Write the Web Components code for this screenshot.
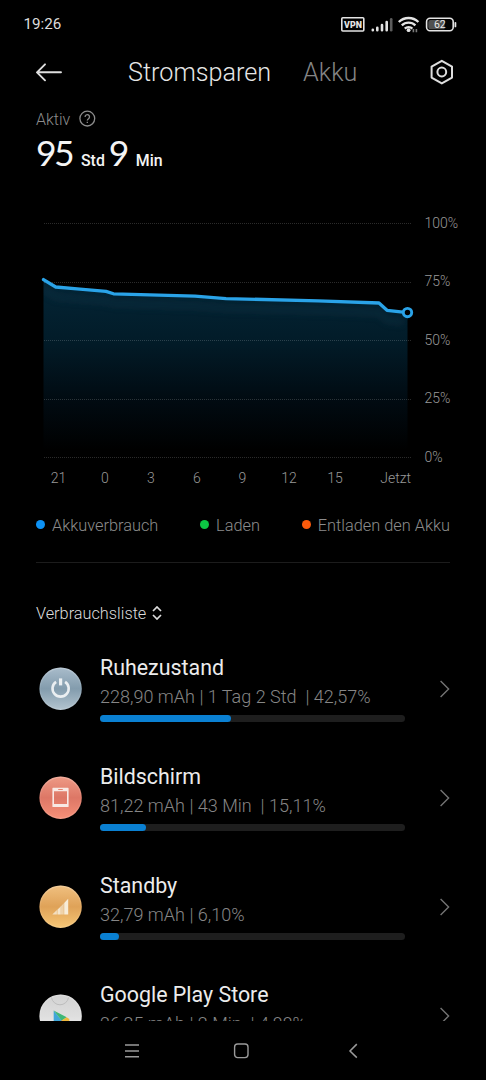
<!DOCTYPE html>
<html lang="de">
<head>
<meta charset="utf-8">
<title>Akku</title>
<style>
html, body {
  margin: 0;
  background: #000;
}
body {
  width: 486px;
  height: 1080px;
  overflow: hidden;
  font-family: Roboto, sans-serif;
  color: #e6e6e6;
}
</style>
</head>
<body>
<battery-app>
  <status-bar slot="status" time="19:26"></status-bar>
  <title-bar slot="title">
    <span slot="active">Stromsparen</span>
    <span slot="other">Akku</span>
  </title-bar>
  <active-time label="Aktiv" hours="95" minutes="9"></active-time>
  <battery-chart></battery-chart>
  <chart-legend>
    <legend-item color="#0d92f5">Akkuverbrauch</legend-item>
    <legend-item color="#0cc543">Laden</legend-item>
    <legend-item color="#fb5a0b">Entladen den Akku</legend-item>
  </chart-legend>
  <list-heading>Verbrauchsliste</list-heading>
  <usage-row icon="power" percent="43">
    Ruhezustand
    <span slot="detail">228,90 mAh | 1 Tag 2 Std&nbsp; | 42,57%</span>
  </usage-row>
  <usage-row icon="screen" percent="15.1">
    Bildschirm
    <span slot="detail">81,22 mAh | 43 Min&nbsp; | 15,11%</span>
  </usage-row>
  <usage-row icon="signal" percent="6.1">
    Standby
    <span slot="detail">32,79 mAh | 6,10%</span>
  </usage-row>
  <usage-row icon="play" percent="4.9">
    Google Play Store
    <span slot="detail">26,25 mAh | 2 Min&nbsp; | 4,88%</span>
  </usage-row>
  <nav-bar slot="nav"></nav-bar>
</battery-app>

<script>
// every element here does the same thing: open a shadow root
// and put its markup in it
class BaseElement extends HTMLElement {
  constructor() {
    super();
    this.attachShadow({ mode: 'open' });
  }
  connectedCallback() {
    this.shadowRoot.innerHTML = this.render();
  }
}

// the whole screen: bars on top and bottom, content is cut off above the nav
class BatteryApp extends BaseElement {
  render() {
    return `
<style>
:host { display: flex; flex-direction: column; height: 1080px; background: #000; }
main { flex: 1; min-height: 0; overflow: hidden; }
</style>
<slot name="status"></slot>
<slot name="title"></slot>
<main><slot></slot></main>
<slot name="nav"></slot>`;
  }
}

class StatusBar extends BaseElement {
  render() {
    return `
<style>
:host {
  display: flex; justify-content: space-between; align-items: center;
  box-sizing: border-box; height: 47px; padding: 0 28px 0 23.4px;
  font-size: 15.2px; color: #dcdcdc;
}
svg { display: block; }
</style>
<span>${this.getAttribute('time')}</span>
<svg width="118" height="20" viewBox="340 13 118 20">
  <rect x="341.8" y="16.8" width="22" height="13.2" rx="1" fill="none" stroke="#e4e4e4" stroke-width="1.6"/>
  <text x="344.1" y="26.7" font-family="Roboto" font-weight="900" font-size="8.8" textLength="17.8" lengthAdjust="spacingAndGlyphs" fill="#e4e4e4">VPN</text>
  <g stroke="#e4e4e4" stroke-width="2.6" stroke-linecap="round">
    <path d="M372.8 28.8v.4M377.3 26.8v2.4M382 24v5.2M386.7 21v8.2"/>
    <path d="M391.2 18.2v11" stroke="#5c5c5c"/>
  </g>
  <g fill="none" stroke="#e4e4e4" stroke-width="2.3">
    <path d="M398.8 21a14 14 0 0 1 19.6 0"/>
    <path d="M401.8 24.4a9.6 9.6 0 0 1 13.6 0"/>
    <path d="M404.8 27.6a5.4 5.4 0 0 1 7.6 0"/>
  </g>
  <circle cx="408.6" cy="29.2" r="1.9" fill="#e4e4e4"/>
  <path d="M413.4 28v3.2M416.4 28v3.2" stroke="#7a7a7a" stroke-width="1.6"/>
  <rect x="426.6" y="17.3" width="26.6" height="12.4" rx="3.4" fill="none" stroke="#e4e4e4" stroke-width="1.6"/>
  <path d="M430.5 19h14v9.2h-14a2.2 2.2 0 0 1-2.2-2.2v-4.8a2.2 2.2 0 0 1 2.2-2.2z" fill="#505050"/>
  <path d="M455.4 21.8v3.6" stroke="#e4e4e4" stroke-width="1.8" stroke-linecap="round"/>
  <text x="439.8" y="27.4" text-anchor="middle" font-family="Roboto" font-size="10.5" fill="#e8e8e8">62</text>
</svg>`;
  }
}

class TitleBar extends BaseElement {
  render() {
    return `
<style>
:host {
  display: grid; grid-template-columns: 92px auto 1fr 24px; align-items: center;
  height: 50px; padding: 0 32px 0 36px;
  font-size: 25.2px; font-weight: 300; line-height: 52px;
}
svg { display: block; margin-bottom: 2px; }
.other { padding-left: 32px; color: #858585; }
</style>
<svg width="28" height="20" viewBox="0 0 28 20" fill="none" stroke="#dedede" stroke-width="1.9" stroke-linecap="round" stroke-linejoin="round">
  <path d="M25 10.3H1.2M9 2.3L1 10.3l8 8"/>
</svg>
<slot name="active"></slot>
<div class="other"><slot name="other"></slot></div>
<svg width="24" height="26" viewBox="0 0 24 26" fill="none" stroke="#dedede" stroke-width="2" stroke-linejoin="round">
  <path d="M11.8 1.8L22 7.6v11L11.8 24.4 1.6 18.6v-11z"/>
  <circle cx="11.8" cy="13" r="4.4"/>
</svg>`;
  }
}

class ActiveTime extends BaseElement {
  render() {
    return `
<style>
:host { display: block; height: 103px; padding: 0 36px; }
.label {
  display: flex; align-items: center; gap: 9px; height: 44px;
  font-size: 16px; font-weight: 300; color: #8c8c8c;
}
.value { display: flex; align-items: baseline; line-height: 32px; margin-top: -4px; color: #f4f4f4; }
b { font: 400 35.5px/32px Lato, sans-serif; letter-spacing: -2.6px; }
span { font-size: 15.9px; font-weight: 500; margin: 0 4px 0 9px; }
</style>
<div class="label">${this.getAttribute('label')}
  <svg width="18" height="18" viewBox="0 0 18 18" fill="none" stroke="#8c8c8c" stroke-width="1.3">
    <circle cx="8.3" cy="8.6" r="7.4"/>
    <path d="M6.1 6.9a2.2 2.2 0 1 1 3.4 1.8c-.8.6-1.2.9-1.2 1.8M8.3 11.8v1.3"/>
  </svg>
</div>
<div class="value">
  <b>${this.getAttribute('hours')}</b><span>Std</span>
  <b>${this.getAttribute('minutes')}</b><span>Min</span>
</div>`;
  }
}

class BatteryChart extends BaseElement {
  render() {
    const line = 'M43.5 279.6L55.7 287L80 289.2L106 291.4L113.5 293.8L195 296.2L226 298.6L318 300.8L379 303L387 310.3L403 312.2';
    const grid = [223.5, 282.5, 340.5, 399.5, 457.5];
    const percents = [[100, 227.5], [75, 286.3], [50, 344.6], [25, 403.3], [0, 461.5]];
    const hours = [[21, 58.5], [0, 105], [3, 151], [6, 197], [9, 242.5], [12, 289], [15, 335]];
    return `
<style>
:host { display: block; height: 300px; }
svg { display: block; }
text { font-size: 14px; font-weight: 300; fill: #989898; }
</style>
<svg width="486" height="300" viewBox="0 200 486 300">
  <defs>
    <linearGradient id="area" x1="0" y1="280" x2="0" y2="450" gradientUnits="userSpaceOnUse">
      <stop offset="0" stop-color="#042536"/>
      <stop offset=".35" stop-color="#021c29"/>
      <stop offset=".7" stop-color="#010b12"/>
      <stop offset="1" stop-color="#000"/>
    </linearGradient>
    <filter id="soft" x="-10%" y="-100%" width="120%" height="300%"><feGaussianBlur stdDeviation="3"/></filter>
    <clipPath id="under"><path d="${line}L407.5 312.5V458H43.5z"/></clipPath>
  </defs>
  <path d="${line}L407.5 312.5V458H43.5z" fill="url(#area)"/>
  <g clip-path="url(#under)">
    <path d="${line}" transform="translate(0 10)" fill="none" stroke="#12384a" stroke-width="6" opacity=".4" filter="url(#soft)"/>
  </g>
  ${grid.map(y => `<path d="M44 ${y}H411" stroke="#fff" stroke-opacity=".17" stroke-dasharray="1 1"/>`).join('')}
  <path d="${line}" fill="none" stroke="#2aa3e8" stroke-width="3.3" stroke-linecap="round" stroke-linejoin="round"/>
  <circle cx="407.5" cy="312.6" r="4.2" fill="#000" stroke="#2aa3e8" stroke-width="2.9"/>
  ${percents.map(([p, y]) => `<text x="424.5" y="${y}">${p}%</text>`).join('')}
  ${hours.map(([h, x]) => `<text x="${x}" y="482.7" text-anchor="middle">${h}</text>`).join('')}
  <text x="411" y="482.7" text-anchor="end">Jetzt</text>
</svg>`;
  }
}

class ChartLegend extends BaseElement {
  render() {
    return `
<style>
:host {
  display: flex; justify-content: space-between; align-items: center;
  height: 50px; margin: 0 36px; padding-bottom: 12px;
  border-bottom: 1px solid #1c1c1c;
}
</style>
<slot></slot>`;
  }
}

class LegendItem extends BaseElement {
  render() {
    return `
<style>
:host { display: flex; align-items: center; gap: 7px; font-size: 16.35px; font-weight: 300; color: #8c8c8c; }
i { width: 9px; height: 9px; border-radius: 50%; margin-top: -2px; background: ${this.getAttribute('color')}; }
</style>
<i></i><span><slot></slot></span>`;
  }
}

class ListHeading extends BaseElement {
  render() {
    return `
<style>
:host {
  display: flex; align-items: center; gap: 6px; height: 50px;
  margin: 25px 36px 5px; font-size: 16.3px; font-weight: 300; color: #dcdcdc;
}
</style>
<span><slot></slot></span>
<svg width="10" height="14" viewBox="0 0 10 14" fill="none" stroke="#dcdcdc" stroke-width="1.7">
  <path d="M1 5l4-4 4 4M1 9l4 4 4-4"/>
</svg>`;
  }
}

// round icons, all drawn on a 43x43 box
const icons = {
  power: {
    colors: ['#a9bccb', '#839cad', '#b3c4cf'],
    shape: `<g fill="none" stroke="#f0f3f5" stroke-width="2.6" opacity=".95">
      <path d="M17.1 14.8a8.1 8.1 0 1 0 9 0"/><path d="M21.6 11.4v7" stroke-width="3.2"/></g>`,
  },
  screen: {
    colors: ['#ee9a85', '#dd7766', '#f79078'],
    shape: `<path fill="#f8e9e4" fill-rule="evenodd" d="M14 11.8h15a.6.6 0 0 1 .6.6v18a.6.6 0 0 1-.6.6H14a.6.6 0 0 1-.6-.6v-18a.6.6 0 0 1 .6-.6zM15 15.2v12.9h13V15.2zM19.2 13.1v.9h4.6v-.9z"/>`,
  },
  signal: {
    colors: ['#f0c080', '#dfa258', '#f7c776'],
    shape: `<path fill="#f4e8d2" d="M13.3 29.6L17.9 25v4.6z" opacity=".85"/>
      <path fill="#f4e8d2" d="M18.4 24.8l3.3-3.3v8.1h-3.3z" opacity=".95"/>
      <path fill="#f4e8d2" d="M21.7 21.4l3.1-3.1v11.3h-3.1z" opacity=".65"/>
      <path fill="#f7ecd8" d="M25.2 17.9l4-4.2v15.9h-4z"/>`,
  },
  play: {
    colors: ['#d2d2d2', '#dedede', '#f4f4f4'],
    shape: `<path d="M12.5 3.5a8.6 8.6 0 0 0 17 0" fill="none" stroke="#bdbdbd"/>
      <path d="M14.7 16.5v20l8-10z" fill="#3fa6d8"/>
      <path d="M14.7 16.5l13 6.8-5 3.4z" fill="#3fb777"/>
      <path d="M22.5 26.5l5.2-3.2 2.6 1.7v3l-3 1.7z" fill="#efb83c"/>
      <path d="M14.7 36.5l7.8-10 5 3.2z" fill="#e0524d"/>`,
  },
};

class UsageRow extends BaseElement {
  render() {
    const icon = icons[this.getAttribute('icon')];
    const [top, mid, bottom] = icon.colors;
    return `
<style>
:host {
  display: grid; grid-template-columns: 61px 305px 1fr; align-items: center;
  height: 91px; padding: 0 36px 0 39px; margin-bottom: 18px;
}
svg { display: block; }
.text { align-self: start; }
.name { font-size: 21.4px; line-height: 28px; padding-top: 11px; color: #ececec; white-space: nowrap; }
.detail { font-size: 18.05px; line-height: 24px; padding-top: 3px; font-weight: 300; color: #868686; white-space: nowrap; }
.bar { height: 7px; margin-top: 6px; border-radius: 4px; background: #1e1e1e; }
.fill { height: 7px; border-radius: 4px; width: ${this.getAttribute('percent')}%; background: #0a80d2; }
.arrow { justify-self: end; }
</style>
<svg width="43" height="43" viewBox="0 0 43 43">
  <defs>
    <linearGradient id="ball" x1="0" y1="0" x2="0" y2="1">
      <stop offset="0" stop-color="${top}"/>
      <stop offset=".5" stop-color="${mid}"/>
      <stop offset="1" stop-color="${bottom}"/>
    </linearGradient>
    <linearGradient id="rim" x1="0" y1="0" x2="0" y2="1">
      <stop offset="0" stop-color="#fff" stop-opacity=".2"/>
      <stop offset=".5" stop-color="#fff" stop-opacity=".05"/>
      <stop offset="1" stop-color="#fff" stop-opacity=".12"/>
    </linearGradient>
  </defs>
  <circle cx="21.6" cy="21.7" r="21.2" fill="url(#ball)"/>
  <circle cx="21.6" cy="21.7" r="20.5" fill="none" stroke="url(#rim)" stroke-width="1.4"/>
  ${icon.shape}
</svg>
<div class="text">
  <div class="name"><slot></slot></div>
  <div class="detail"><slot name="detail"></slot></div>
  <div class="bar"><div class="fill"></div></div>
</div>
<svg class="arrow" width="11" height="18" viewBox="0 0 11 18" fill="none" stroke="#747474" stroke-width="1.4">
  <path d="M1.6 1l8 8-8 8"/>
</svg>`;
  }
}

class NavBar extends BaseElement {
  render() {
    return `
<style>
:host {
  display: grid; grid-template-columns: 108px 111px 112px; justify-content: center; align-items: center;
  height: 59px; background: #000;
}
svg { display: block; margin: auto; }
</style>
<svg width="16" height="16" viewBox="0 0 16 16" stroke="#9a9a9a" stroke-width="1.4"><path d="M1 2h14M1 8h14M1 13.7h14"/></svg>
<svg width="16" height="16" viewBox="0 0 16 16" fill="none" stroke="#9a9a9a" stroke-width="1.4"><rect x="1.6" y="1" width="13.4" height="13.6" rx="3"/></svg>
<svg width="16" height="16" viewBox="0 0 16 16" fill="none" stroke="#9a9a9a" stroke-width="1.5"><path d="M11.8 1.1L5 8l6.8 6.6"/></svg>`;
  }
}

customElements.define('battery-app', BatteryApp);
customElements.define('status-bar', StatusBar);
customElements.define('title-bar', TitleBar);
customElements.define('active-time', ActiveTime);
customElements.define('battery-chart', BatteryChart);
customElements.define('chart-legend', ChartLegend);
customElements.define('legend-item', LegendItem);
customElements.define('list-heading', ListHeading);
customElements.define('usage-row', UsageRow);
customElements.define('nav-bar', NavBar);
</script>
</body>
</html>
